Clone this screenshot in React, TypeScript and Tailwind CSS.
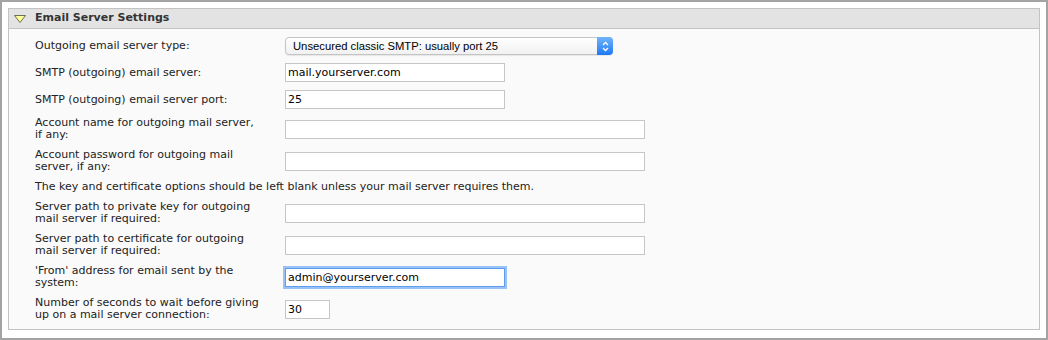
import type { ReactNode } from "react";

const labelFont = "font-['DejaVu_Sans',Verdana,sans-serif]";

function Field({
  value = "",
  width,
  focused = false,
}: {
  value?: string;
  width: string;
  focused?: boolean;
}) {
  return (
    <input
      readOnly
      value={value}
      className={`${width} h-[19px] bg-white px-[2px] text-[11px] text-black outline-none ${labelFont} ${
        focused
          ? "border border-[#5e9ded] shadow-[0_0_0_2px_rgba(120,175,245,0.75)]"
          : "border border-[#c6c6c6]"
      }`}
    />
  );
}

function Row({ label, children }: { label: ReactNode; children: ReactNode }) {
  return (
    <div className="flex items-center py-1">
      <div className="w-[250px] shrink-0 leading-[12px]">{label}</div>
      {children}
    </div>
  );
}

function ServerTypeSelect() {
  return (
    <div className="flex h-[18px] w-[328px] items-stretch rounded-[4px] border border-[#c4c4c4] bg-gradient-to-b from-white to-[#f1f1f1] shadow-[0_1px_1px_rgba(0,0,0,0.08)]">
      <div className="flex flex-1 items-center pl-[7px] font-['Liberation_Sans',Arial,sans-serif] text-[11.25px] text-black">
        Unsecured classic SMTP: usually port 25
      </div>
      <div className="-my-px -mr-px flex w-[16px] items-center justify-center rounded-r-[4px] bg-gradient-to-b from-[#6fb4fb] to-[#1b79f2]">
        <svg width="7" height="11" viewBox="0 0 7 11" fill="none">
          <path d="M1 4 L3.5 1.5 L6 4" stroke="white" strokeWidth="1.3" />
          <path d="M1 7 L3.5 9.5 L6 7" stroke="white" strokeWidth="1.3" />
        </svg>
      </div>
    </div>
  );
}

export default function App() {
  return (
    <div className={`h-[340px] w-[1048px] border-2 border-[#a3a3a3] bg-white p-[6px] ${labelFont}`}>
      <div className="border border-[#c3c3c3] bg-[#fafafa]">
        {/* Header */}
        <div className="flex h-[20px] items-center border-b border-[#c3c3c3] bg-[#e3e3e3]">
          <svg width="12" height="8" viewBox="0 0 12 8" className="ml-[5px]">
            <path d="M0.5 0.5 H11.5 L6 7.5 Z" fill="#ffff9a" stroke="#6e6e50" strokeWidth="1" />
          </svg>
          <span className="ml-[9px] text-[11px] font-bold text-[#333]">Email Server Settings</span>
        </div>

        {/* Body */}
        <div className="py-1 pl-[26px] text-[11px] text-[#222]">
          <Row label="Outgoing email server type:">
            <ServerTypeSelect />
          </Row>
          <Row label="SMTP (outgoing) email server:">
            <Field width="w-[220px]" value="mail.yourserver.com" />
          </Row>
          <Row label="SMTP (outgoing) email server port:">
            <Field width="w-[220px]" value="25" />
          </Row>
          <Row label={<>Account name for outgoing mail server,<br />if any:</>}>
            <Field width="w-[360px]" />
          </Row>
          <Row label={<>Account password for outgoing mail<br />server, if any:</>}>
            <Field width="w-[360px]" />
          </Row>
          <div className="py-1 leading-[12px]">
            The key and certificate options should be left blank unless your mail server requires them.
          </div>
          <Row label={<>Server path to private key for outgoing<br />mail server if required:</>}>
            <Field width="w-[360px]" />
          </Row>
          <Row label={<>Server path to certificate for outgoing<br />mail server if required:</>}>
            <Field width="w-[360px]" />
          </Row>
          <Row label={<>'From' address for email sent by the<br />system:</>}>
            <Field width="w-[220px]" value="admin@yourserver.com" focused />
          </Row>
          <Row label={<>Number of seconds to wait before giving<br />up on a mail server connection:</>}>
            <Field width="w-[45px]" value="30" />
          </Row>
        </div>
      </div>
    </div>
  );
}
